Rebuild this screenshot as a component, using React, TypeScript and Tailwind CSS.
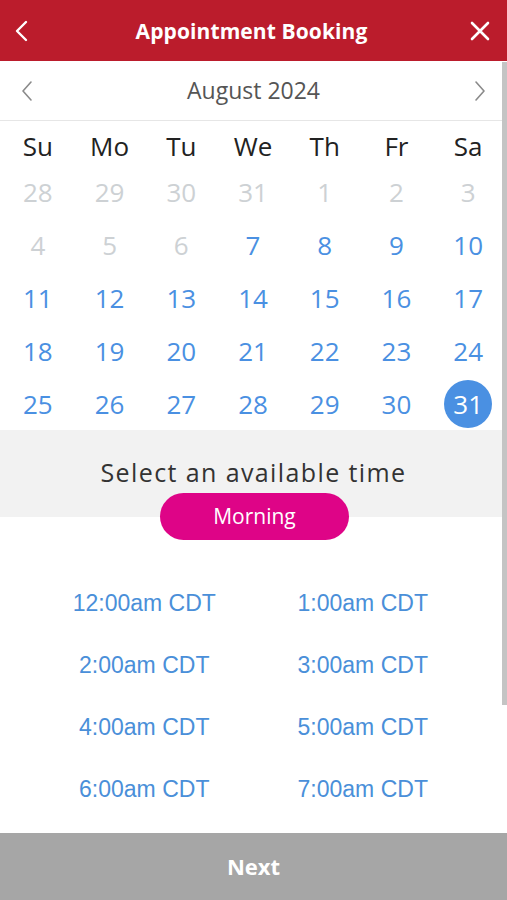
import React from "react";

const weeks: { d: number; off?: boolean; sel?: boolean }[][] = [
  [28, 29, 30, 31, 1, 2, 3].map((d) => ({ d, off: true })),
  [
    { d: 4, off: true },
    { d: 5, off: true },
    { d: 6, off: true },
    { d: 7 },
    { d: 8 },
    { d: 9 },
    { d: 10 },
  ],
  [11, 12, 13, 14, 15, 16, 17].map((d) => ({ d })),
  [18, 19, 20, 21, 22, 23, 24].map((d) => ({ d })),
  [
    { d: 25 },
    { d: 26 },
    { d: 27 },
    { d: 28 },
    { d: 29 },
    { d: 30 },
    { d: 31, sel: true },
  ],
];

const times = [
  "12:00am CDT",
  "1:00am CDT",
  "2:00am CDT",
  "3:00am CDT",
  "4:00am CDT",
  "5:00am CDT",
  "6:00am CDT",
  "7:00am CDT",
];

export default function App() {
  return (
    <div
      className="relative w-[507px] h-[900px] bg-white flex flex-col overflow-hidden"
      style={{ fontFamily: '"Open Sans", "Noto Sans", sans-serif' }}
    >
      {/* header */}
      <div className="h-[61px] bg-[#bb1c2c] flex items-center justify-between px-[14px] text-white shrink-0">
        <svg width="16" height="22" viewBox="0 0 16 22" fill="none" className="mt-[1px]">
          <path d="M12 2 L3 11 L12 20" stroke="white" strokeWidth="2.4" strokeLinecap="round" strokeLinejoin="round" />
        </svg>
        <div className="text-[21px] font-bold tracking-[0.1px] leading-none pt-[2px] pl-[4px]">Appointment Booking</div>
        <svg width="22" height="22" viewBox="0 0 22 22" fill="none" className="mr-[2px]">
          <path d="M3 3 L19 19 M19 3 L3 19" stroke="white" strokeWidth="2.6" strokeLinecap="round" />
        </svg>
      </div>

      {/* month row */}
      <div className="h-[60px] flex items-center justify-between pl-[20px] pr-[20px] border-b border-[#e6e6e6] shrink-0">
        <svg width="14" height="22" viewBox="0 0 14 22" fill="none">
          <path d="M11 2 L3 11 L11 20" stroke="#8a8a8a" strokeWidth="1.6" strokeLinecap="round" strokeLinejoin="round" />
        </svg>
        <div className="text-[23px] text-[#555555] leading-none">August 2024</div>
        <svg width="14" height="22" viewBox="0 0 14 22" fill="none">
          <path d="M3 2 L11 11 L3 20" stroke="#8a8a8a" strokeWidth="1.6" strokeLinecap="round" strokeLinejoin="round" />
        </svg>
      </div>

      {/* day headers */}
      <div className="flex pl-[2px] pr-[3px] h-[44px] pt-[6px] items-center text-[26px] text-[#222222] leading-none shrink-0">
        {["Su", "Mo", "Tu", "We", "Th", "Fr", "Sa"].map((d) => (
          <div key={d} className="flex-1 text-center">
            {d}
          </div>
        ))}
      </div>

      {/* dates */}
      <div className="flex flex-col pl-[2px] pr-[3px] shrink-0">
        {weeks.map((w, i) => (
          <div key={i} className="flex h-[53px] items-center text-[26px] leading-none">
            {w.map((c, j) => (
              <div key={j} className="flex-1 flex justify-center items-center">
                {c.sel ? (
                  <div className="w-[48px] h-[48px] rounded-full bg-[#4a90e2] text-white flex items-center justify-center">
                    {c.d}
                  </div>
                ) : (
                  <span className={c.off ? "text-[#cdd1d4]" : "text-[#4a90e2]"}>{c.d}</span>
                )}
              </div>
            ))}
          </div>
        ))}
      </div>

      {/* select section */}
      <div className="relative bg-[#f2f2f2] h-[87px] shrink-0 flex justify-center">
        <div className="mt-[30px] text-[25px] text-[#333333] tracking-[1.4px] leading-none">
          Select an available time
        </div>
        <div className="absolute left-[160px] top-[63px] w-[189px] h-[47px] rounded-full bg-[#de0487] text-white text-[21px] flex items-center justify-center leading-none">
          Morning
        </div>
      </div>

      {/* times */}
      <div
        className="flex-1 min-h-0 overflow-hidden grid grid-cols-2 content-start pt-[75px] text-[23px] text-[#4a8fd9] leading-none"
        style={{ fontFamily: '"Liberation Sans", Arial, sans-serif' }}
      >
        {times.map((t, i) => (
          <div
            key={t}
            className={`h-[62px] flex justify-center ${i % 2 === 0 ? "pl-[35px]" : "pr-[35px]"}`}
          >
            {t}
          </div>
        ))}
      </div>

      {/* next */}
      <div className="h-[67px] bg-[#a6a6a6] flex items-center justify-center text-white text-[22px] font-bold shrink-0">
        Next
      </div>

      {/* scrollbar */}
      <div className="absolute right-0 top-[62px] w-[5px] h-[643px] bg-[#c4c4c4]" />
    </div>
  );
}
